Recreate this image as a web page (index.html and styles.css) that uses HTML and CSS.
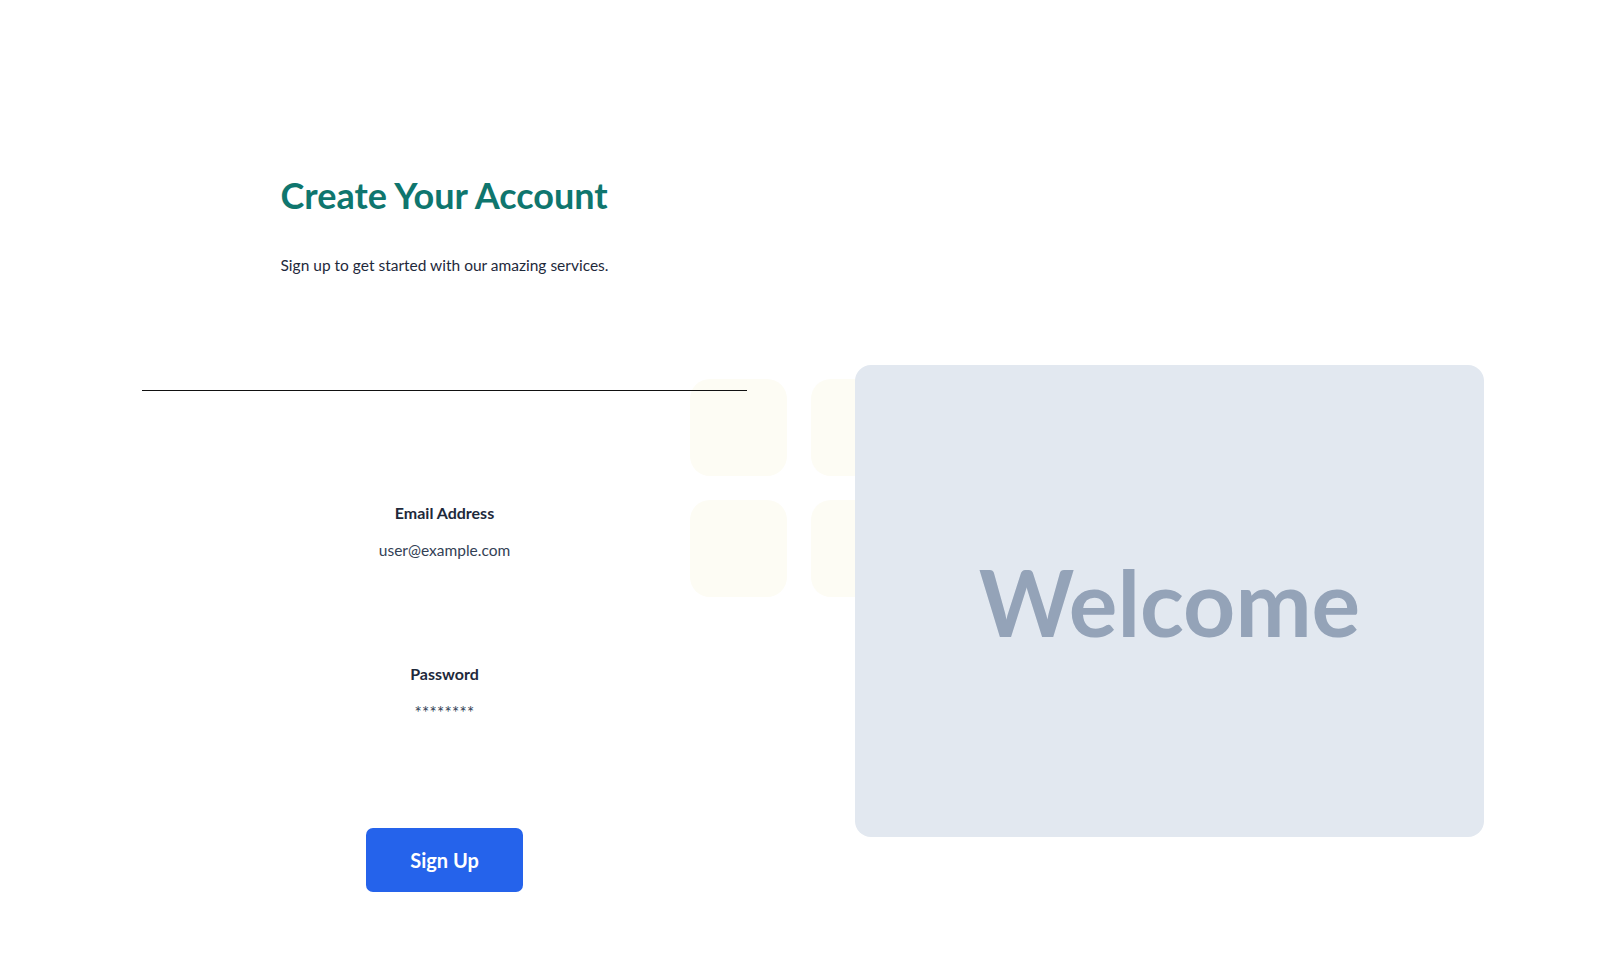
FILE: index.html
```html
<!DOCTYPE html>
<html lang="en">
<head>
    <meta charset="UTF-8"/>
    <meta name="viewport" content="width=device-width, initial-scale=1.0"/>
    <title>Create Your Account</title>
    <link rel="stylesheet" href="styles.css">
</head>
<body>

<main class="page">
    <section class="signup">
        <div class="intro">
            <h1>Create Your Account</h1>
            <p>Sign up to get started with our amazing services.</p>
        </div>

        <hr class="divider">

        <form class="signup-form" onsubmit="return false;">
            <div class="field">
                <label>Email Address</label>
                <span class="value">user@example.com</span>
            </div>
            <div class="field field-password">
                <label>Password</label>
                <span class="value stars">********</span>
            </div>
            <button type="submit" class="btn-primary">Sign Up</button>
        </form>
    </section>

    <aside class="showcase">
        <div class="tiles">
            <span></span><span></span><span></span><span></span>
        </div>
        <div class="welcome-card">
            <h2>Welcome</h2>
        </div>
    </aside>
</main>

</body>
</html>
```

FILE: styles.css
```css
* {
    box-sizing: border-box;
}

body {
    margin: 0;
    padding: 0;
    font-family: 'Lato', 'Open Sans', sans-serif;
    color: #1e293b;
    background: #ffffff;
}

.page {
    display: flex;
    align-items: flex-start;
    gap: 108px;
    padding-left: 142px;
}

/* left column */

.signup {
    width: 605px;
    display: flex;
    flex-direction: column;
    align-items: center;
    padding-top: 174px;
}

.intro h1 {
    margin: 0;
    font-size: 36px;
    line-height: 43px;
    font-weight: 700;
    color: #0f766e;
}

.intro p {
    margin: 39px 0 0;
    font-size: 15.5px;
    line-height: 18px;
    color: #1e293b;
}

.divider {
    position: relative;
    z-index: 2;
    width: 100%;
    margin: 116px 0 0;
    border: 0;
    border-top: 1px solid #111;
}

.signup-form {
    display: flex;
    flex-direction: column;
    align-items: center;
    padding-top: 113px;
}

.field {
    display: flex;
    flex-direction: column;
    align-items: center;
    gap: 19px;
}

.field label {
    font-size: 16px;
    line-height: 18px;
    font-weight: 700;
    color: #1e293b;
}

.field .value {
    font-size: 15.5px;
    line-height: 18px;
    color: #334155;
}

.field-password {
    margin-top: 106px;
    gap: 16px;
}

.field .stars {
    font-size: 17px;
    letter-spacing: 0.3px;
    padding-top: 5px;
}

.btn-primary {
    margin-top: 106px;
    width: 157px;
    height: 64px;
    border: 0;
    border-radius: 7px;
    background: #2563eb;
    color: #fff;
    font-family: inherit;
    font-size: 20px;
    font-weight: 700;
    cursor: pointer;
}

/* right column */

.showcase {
    position: relative;
    margin-top: 365px;
}

.tiles {
    position: absolute;
    left: -165px;
    top: 14px;
    display: grid;
    grid-template-columns: 97px 97px;
    gap: 24px;
    z-index: 0;
}

.tiles span {
    display: block;
    height: 97px;
    border-radius: 20px;
    background: #fdfcf4;
}

.welcome-card {
    position: relative;
    z-index: 1;
    width: 629px;
    height: 472px;
    border-radius: 16px;
    background: #e2e8f0;
    display: flex;
    align-items: center;
    justify-content: center;
}

.welcome-card h2 {
    margin: 0;
    font-size: 91px;
    font-weight: 700;
    color: #94a3b8;
}
```
